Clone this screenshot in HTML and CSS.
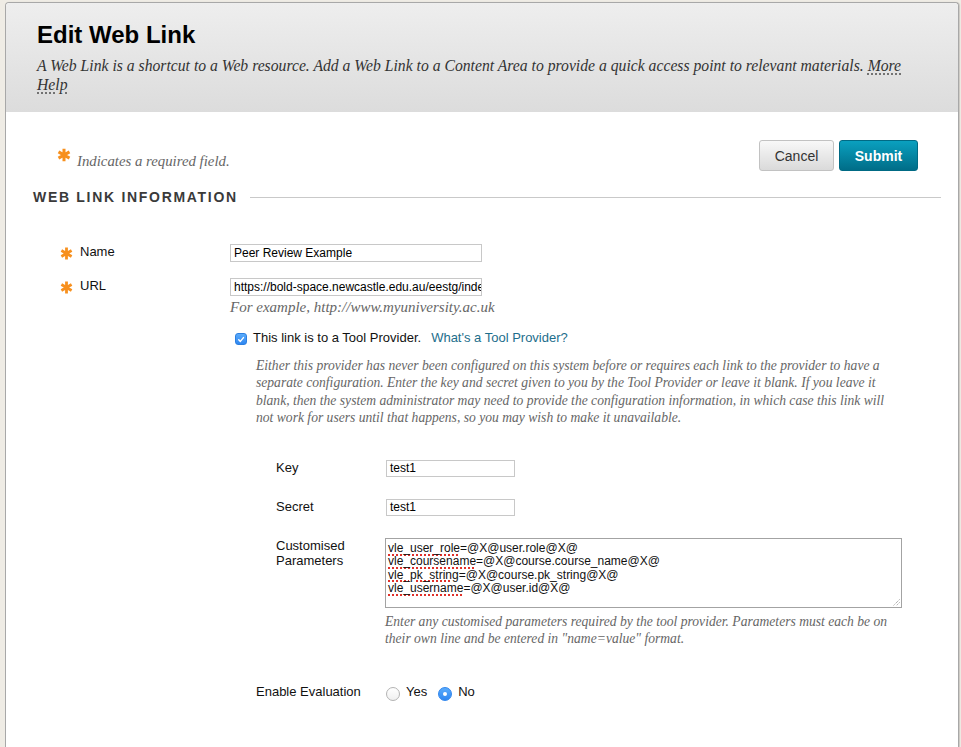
FILE: index.html
```html
<!DOCTYPE html>
<html lang="en">
<head>
<meta charset="utf-8">
<title>Edit Web Link</title>
<link rel="stylesheet" href="styles.css">
</head>
<body>
<div class="panel">
  <header class="page-header">
    <h1 class="page-title">Edit Web Link</h1>
    <p class="page-desc">A Web Link is a shortcut to a Web resource. Add a Web Link to a Content Area to provide a quick access point to relevant materials. <a class="help-link" href="#">More Help</a></p>
  </header>

  <div class="top-bar">
    <p class="required-note"><svg class="req" viewBox="0 0 13 13" width="14" height="14"><path d="M6.5 0.6V12.4M1.4 3.55L11.6 9.45M1.4 9.45L11.6 3.55" stroke="#f7901e" stroke-width="2.8"/></svg><span class="req-text">Indicates a required field.</span></p>
    <div class="actions">
      <button class="btn btn-cancel" type="button">Cancel</button>
      <button class="btn btn-submit" type="button">Submit</button>
    </div>
  </div>

  <h2 class="section-title"><span>WEB LINK INFORMATION</span></h2>

  <div class="fields">
    <div class="row row-name">
      <label class="label"><svg class="req-sm" viewBox="0 0 13 13" width="13" height="13"><path d="M6.5 0.6V12.4M1.4 3.55L11.6 9.45M1.4 9.45L11.6 3.55" stroke="#f7901e" stroke-width="2.8"/></svg>Name</label>
      <div class="field"><div class="input wide">Peer Review Example</div></div>
    </div>
    <div class="row row-url">
      <label class="label"><svg class="req-sm" viewBox="0 0 13 13" width="13" height="13"><path d="M6.5 0.6V12.4M1.4 3.55L11.6 9.45M1.4 9.45L11.6 3.55" stroke="#f7901e" stroke-width="2.8"/></svg>URL</label>
      <div class="field">
        <div class="input wide clip">https://bold-space.newcastle.edu.au/eestg/index.php</div>
        <p class="hint example">For example, http://www.myuniversity.ac.uk</p>
        <div class="check-row">
          <span class="checkbox"><svg viewBox="0 0 11 11" width="11" height="11"><path d="M3 5.8L4.8 7.6L8.2 3.4" fill="none" stroke="#fff" stroke-width="1.6" stroke-linecap="round" stroke-linejoin="round"/></svg></span>
          <span class="check-label">This link is to a Tool Provider.</span>
          <a class="tp-link" href="#">What's a Tool Provider?</a>
        </div>
        <div class="tp">
          <p class="hint tp-note">Either this provider has never been configured on this system before or requires each link to the provider to have a separate configuration. Enter the key and secret given to you by the Tool Provider or leave it blank. If you leave it blank, then the system administrator may need to provide the configuration information, in which case this link will not work for users until that happens, so you may wish to make it unavailable.</p>
          <div class="sub-row sub-key">
            <span class="sub-label indent">Key</span>
            <div class="input short">test1</div>
          </div>
          <div class="sub-row sub-secret">
            <span class="sub-label indent">Secret</span>
            <div class="input short">test1</div>
          </div>
          <div class="sub-row sub-params">
            <span class="sub-label indent multi">Customised<br>Parameters</span>
            <div class="sub-field">
              <div class="textarea">
                <div><span class="spell">vle_user_role</span>=@X@user.role@X@</div>
                <div><span class="spell">vle_coursename</span>=@X@course.course_name@X@</div>
                <div><span class="spell">vle_pk_string</span>=@X@course.pk_string@X@</div>
                <div><span class="spell">vle_username</span>=@X@user.id@X@</div>
                <svg class="grip" viewBox="0 0 8 8" width="8" height="8"><path d="M7.5 1.5L1.5 7.5M7.5 4.5L4.5 7.5" stroke="#8a8a8a" stroke-width="1" stroke-dasharray="1 1"/></svg>
              </div>
              <p class="hint params-note">Enter any customised parameters required by the tool provider. Parameters must each be on their own line and be entered in "name=value" format.</p>
            </div>
          </div>
          <div class="sub-row sub-eval">
            <span class="sub-label">Enable Evaluation</span>
            <div class="radios">
              <span class="radio"></span><span class="radio-label">Yes</span>
              <span class="radio checked"></span><span class="radio-label">No</span>
            </div>
          </div>
        </div>
      </div>
    </div>
  </div>
</div>
</body>
</html>
```

FILE: styles.css
```css
* { box-sizing: border-box; }
html, body { margin: 0; padding: 0; }
body {
  background: #efece5;
  font-family: "Liberation Sans", Arial, sans-serif;
  color: #222;
  width: 961px;
  height: 747px;
  overflow: hidden;
}
.panel {
  margin: 2px 2px 0 5px;
  border: 1px solid #a8a8a8;
  border-bottom: none;
  border-radius: 4px 4px 0 0;
  background: #fff;
  min-height: 745px;
  box-shadow: 1px 0 1px rgba(0,0,0,0.15);
}
.page-header {
  padding: 18px 31px 18px 31px;
  background: linear-gradient(#eeeeee, #dcdcdc);
  border-radius: 4px 4px 0 0;
}
.page-title {
  margin: 0;
  font-size: 24px;
  line-height: 28px;
  font-weight: bold;
  color: #000;
}
.page-desc {
  margin: 7px 0 0 0;
  font-family: "Liberation Serif", Georgia, serif;
  font-style: italic;
  font-size: 15.7px;
  line-height: 19px;
  color: #333;
}
.help-link {
  color: #333;
  text-decoration: underline dotted #555;
  text-underline-offset: 3px;
}
.top-bar {
  display: flex;
  justify-content: space-between;
  align-items: flex-start;
  margin-top: 28px;
  padding: 0 40px 0 51px;
}
.required-note {
  margin: 8px 0 0 0;
  font-family: "Liberation Serif", Georgia, serif;
  font-style: italic;
  font-size: 14.8px;
  line-height: 17px;
  color: #666;
}
.req {
  vertical-align: 4px;
  margin-right: 6px;
}
.actions {
  display: flex;
  gap: 5px;
}
.btn {
  height: 31px;
  border-radius: 3px;
  font-family: "Liberation Sans", Arial, sans-serif;
  font-size: 14px;
  padding: 0;
  cursor: pointer;
}
.btn-cancel {
  width: 75px;
  border: 1px solid #c2c2c2;
  background: linear-gradient(#f8f8f8, #dadada);
  color: #333;
}
.btn-submit {
  width: 79px;
  border: 1px solid #006a84;
  background: linear-gradient(#0aa0bf, #006d88);
  color: #fff;
  font-weight: bold;
}
.section-title {
  display: flex;
  align-items: center;
  margin: 18px 17px 0 27px;
  font-size: 14px;
  line-height: 16px;
  font-weight: bold;
  letter-spacing: 1.7px;
  color: #3a3a3a;
}
.section-title::after {
  content: "";
  flex: 1;
  height: 1px;
  background: #c9c9c9;
  margin-left: 12px;
}
.fields {
  padding-left: 54px;
  padding-top: 39px;
}
.row {
  display: flex;
  align-items: flex-start;
}
.row-url { margin-top: 16px; }
.label {
  width: 170px;
  flex: none;
  font-size: 13px;
  line-height: 16px;
  color: #111;
  display: flex;
  align-items: center;
}
.req-sm {
  margin-right: 7px;
  margin-top: 2px;
}
.field { flex: 1; }
.input {
  border: 1px solid #c8c8c8;
  background: #fff;
  font-family: "Liberation Sans", Arial, sans-serif;
  font-size: 12px;
  line-height: 16px;
  color: #000;
  padding: 0 3px;
  white-space: nowrap;
  overflow: hidden;
}
.input.wide { width: 252px; height: 18px; }
.input.short { width: 129px; height: 17px; line-height: 15px; }
.hint {
  font-family: "Liberation Serif", Georgia, serif;
  font-style: italic;
  color: #666;
  margin: 0;
}
.example {
  margin-top: 2px;
  font-size: 15px;
  line-height: 18px;
}
.check-row {
  display: flex;
  align-items: flex-start;
  margin-top: 14px;
  padding-left: 5px;
  font-size: 13px;
  line-height: 16px;
}
.checkbox {
  width: 12px;
  height: 12px;
  margin-top: 3px;
  margin-right: 6px;
  border-radius: 3px;
  background: linear-gradient(#5aabfb, #2f87f1);
  border: 1px solid #2c7fe0;
  display: flex;
  align-items: center;
  justify-content: center;
}
.checkbox svg { display: block; }
.check-label { color: #111; }
.tp-link {
  margin-left: 10px;
  color: #1d6e8c;
  text-decoration: none;
}
.tp {
  padding-left: 26px;
}
.tp-note {
  margin-top: 11px;
  font-size: 13.6px;
  line-height: 17.3px;
  width: 640px;
}
.sub-row {
  display: flex;
  align-items: flex-start;
}
.sub-key { margin-top: 34px; }
.sub-secret { margin-top: 22px; }
.sub-params { margin-top: 22px; }
.sub-eval { margin-top: 37px; }
.sub-label {
  width: 130px;
  flex: none;
  font-size: 13px;
  line-height: 16px;
  color: #111;
}
.sub-label.indent { padding-left: 20px; }
.sub-label.multi { line-height: 15px; }
.sub-field { width: 517px; margin-left: -1px; }
.textarea {
  position: relative;
  width: 517px;
  height: 70px;
  border: 1px solid #a3a3a3;
  padding: 3px 2px;
  font-size: 12px;
  line-height: 13.3px;
  color: #111;
}
.spell {
  text-decoration: underline dotted #e0312a;
  text-decoration-thickness: 1.5px;
  text-underline-offset: 2px;
}
.grip {
  position: absolute;
  right: 1px;
  bottom: 1px;
}
.params-note {
  margin-top: 5px;
  font-size: 13.6px;
  line-height: 17px;
}
.radios {
  display: flex;
  align-items: flex-start;
  font-size: 13px;
  line-height: 16px;
  color: #111;
}
.radio {
  width: 14px;
  height: 14px;
  margin-top: 3px;
  border-radius: 50%;
  border: 1px solid #b3b3b3;
  background: linear-gradient(#ffffff, #f0f0f0);
  position: relative;
}
.radio.checked {
  border-color: #2f86ee;
  background: linear-gradient(#5aabfb, #2f87f1);
}
.radio.checked::after {
  content: "";
  position: absolute;
  left: 4px;
  top: 4px;
  width: 4px;
  height: 4px;
  border-radius: 50%;
  background: #fff;
}
.radio-label {
  margin: 0 0 0 6px;
}
.radio-label:nth-child(2) { margin-right: 11px; }
```
